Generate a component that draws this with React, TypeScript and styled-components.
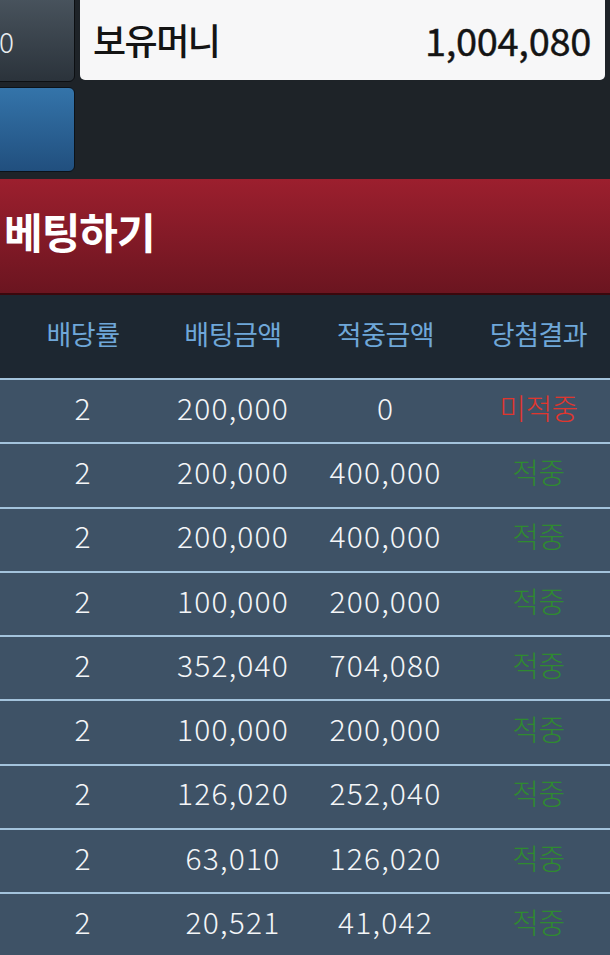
import React from 'react';
import styled, { createGlobalStyle } from 'styled-components';

type Bet = {
  odds: string;
  amount: string;
  win: string;
  hit: boolean;
};

const bets: Bet[] = [
  { odds: '2', amount: '200,000', win: '0', hit: false },
  { odds: '2', amount: '200,000', win: '400,000', hit: true },
  { odds: '2', amount: '200,000', win: '400,000', hit: true },
  { odds: '2', amount: '100,000', win: '200,000', hit: true },
  { odds: '2', amount: '352,040', win: '704,080', hit: true },
  { odds: '2', amount: '100,000', win: '200,000', hit: true },
  { odds: '2', amount: '126,020', win: '252,040', hit: true },
  { odds: '2', amount: '63,010', win: '126,020', hit: true },
  { odds: '2', amount: '20,521', win: '41,042', hit: true },
];

const App: React.FC = () => {
  return (
    <>
      <GlobalStyle />
      <Page>
        <TopArea>
          <ButtonColumn>
            <ChipButton>10,000</ChipButton>
            <ActionButton />
          </ButtonColumn>
          <MoneyBox>
            <MoneyLabel>보유머니</MoneyLabel>
            <MoneyValue>1,004,080</MoneyValue>
          </MoneyBox>
        </TopArea>

        <BetBar>베팅하기</BetBar>

        <Table>
          <HeadRow>
            <HeadCell>배당률</HeadCell>
            <HeadCell>배팅금액</HeadCell>
            <HeadCell>적중금액</HeadCell>
            <HeadCell>당첨결과</HeadCell>
          </HeadRow>
          {bets.map((bet, i) => (
            <Row key={i}>
              <Cell>{bet.odds}</Cell>
              <Cell>{bet.amount}</Cell>
              <Cell>{bet.win}</Cell>
              <ResultCell hit={bet.hit}>{bet.hit ? '적중' : '미적중'}</ResultCell>
            </Row>
          ))}
        </Table>
      </Page>
    </>
  );
};

const GlobalStyle = createGlobalStyle`
  html, body {
    margin: 0;
    padding: 0;
    background: #1e2328;
  }
  body {
    font-family: 'Noto Sans CJK KR', 'Noto Sans', sans-serif;
  }
`;

const Page = styled.div`
  width: 610px;
  height: 955px;
  overflow: hidden;
  background: #1e2328;
`;

const TopArea = styled.div`
  display: flex;
  align-items: flex-start;
  gap: 5px;
  margin-top: -10px;
`;

const ButtonColumn = styled.div`
  display: flex;
  flex-direction: column;
  gap: 5px;
  margin-left: -145px;
  flex-shrink: 0;
`;

const ChipButton = styled.div`
  width: 220px;
  height: 92px;
  box-sizing: border-box;
  border: 1px solid #0c0f12;
  border-radius: 6px;
  background: linear-gradient(180deg, #4b5660 0%, #2b333b 100%);
  color: #e8ecef;
  font-size: 28px;
  font-weight: 300;
  display: flex;
  align-items: center;
  justify-content: center;
  padding: 10px 0 0 16px;
`;

const ActionButton = styled.div`
  width: 220px;
  height: 85px;
  box-sizing: border-box;
  border: 1px solid #0c1218;
  border-radius: 6px;
  background: linear-gradient(180deg, #3474aa 0%, #214f7e 100%);
`;

const MoneyBox = styled.div`
  width: 525px;
  height: 90px;
  flex-shrink: 0;
  box-sizing: border-box;
  padding: 8px 14px 0 13px;
  border-radius: 5px;
  background: #f7f7f8;
  display: flex;
  align-items: center;
  justify-content: space-between;
  color: #141414;
  font-size: 36px;
  font-weight: 400;
`;

const MoneyLabel = styled.span`
  font-weight: 500;
  letter-spacing: -1.5px;
`;

const MoneyValue = styled.span`
  font-size: 38px;
  letter-spacing: -0.3px;
  -webkit-text-stroke: 0.4px #141414;
`;

const BetBar = styled.div`
  margin-top: 7px;
  height: 116px;
  border-bottom: 2px solid #3a080d;
  background: linear-gradient(180deg, #9c1f2e 0%, #6b1520 100%);
  color: #ffffff;
  font-size: 42px;
  font-weight: 700;
  display: flex;
  align-items: center;
  padding: 0 0 12px 4px;
  box-sizing: border-box;
  letter-spacing: -1px;
`;

const Table = styled.div`
  display: flex;
  flex-direction: column;
`;

const gridColumns = `
  display: grid;
  grid-template-columns: 150px 150px 155px 151px;
  padding-left: 8px;
  align-items: center;
`;

const HeadRow = styled.div`
  ${gridColumns}
  height: 83px;
  box-sizing: border-box;
  padding-bottom: 6px;
  background: #1d2731;
`;

const HeadCell = styled.div`
  text-align: center;
  color: #6fa7d9;
  font-size: 27px;
  font-weight: 400;
  letter-spacing: -0.5px;
`;

const Row = styled.div`
  ${gridColumns}
  height: 64.3px;
  box-sizing: border-box;
  padding-bottom: 9px;
  border-top: 2px solid #a3c3dc;
  background: #3e5266;
`;

const Cell = styled.div`
  text-align: center;
  color: #f4f6f8;
  font-size: 30px;
  font-weight: 300;
  letter-spacing: 1.2px;
`;

const ResultCell = styled(Cell)<{ hit: boolean }>`
  font-size: 29px;
  letter-spacing: -0.5px;
  color: ${({ hit }) => (hit ? '#2f8a30' : '#e0362e')};
`;

export default App;
